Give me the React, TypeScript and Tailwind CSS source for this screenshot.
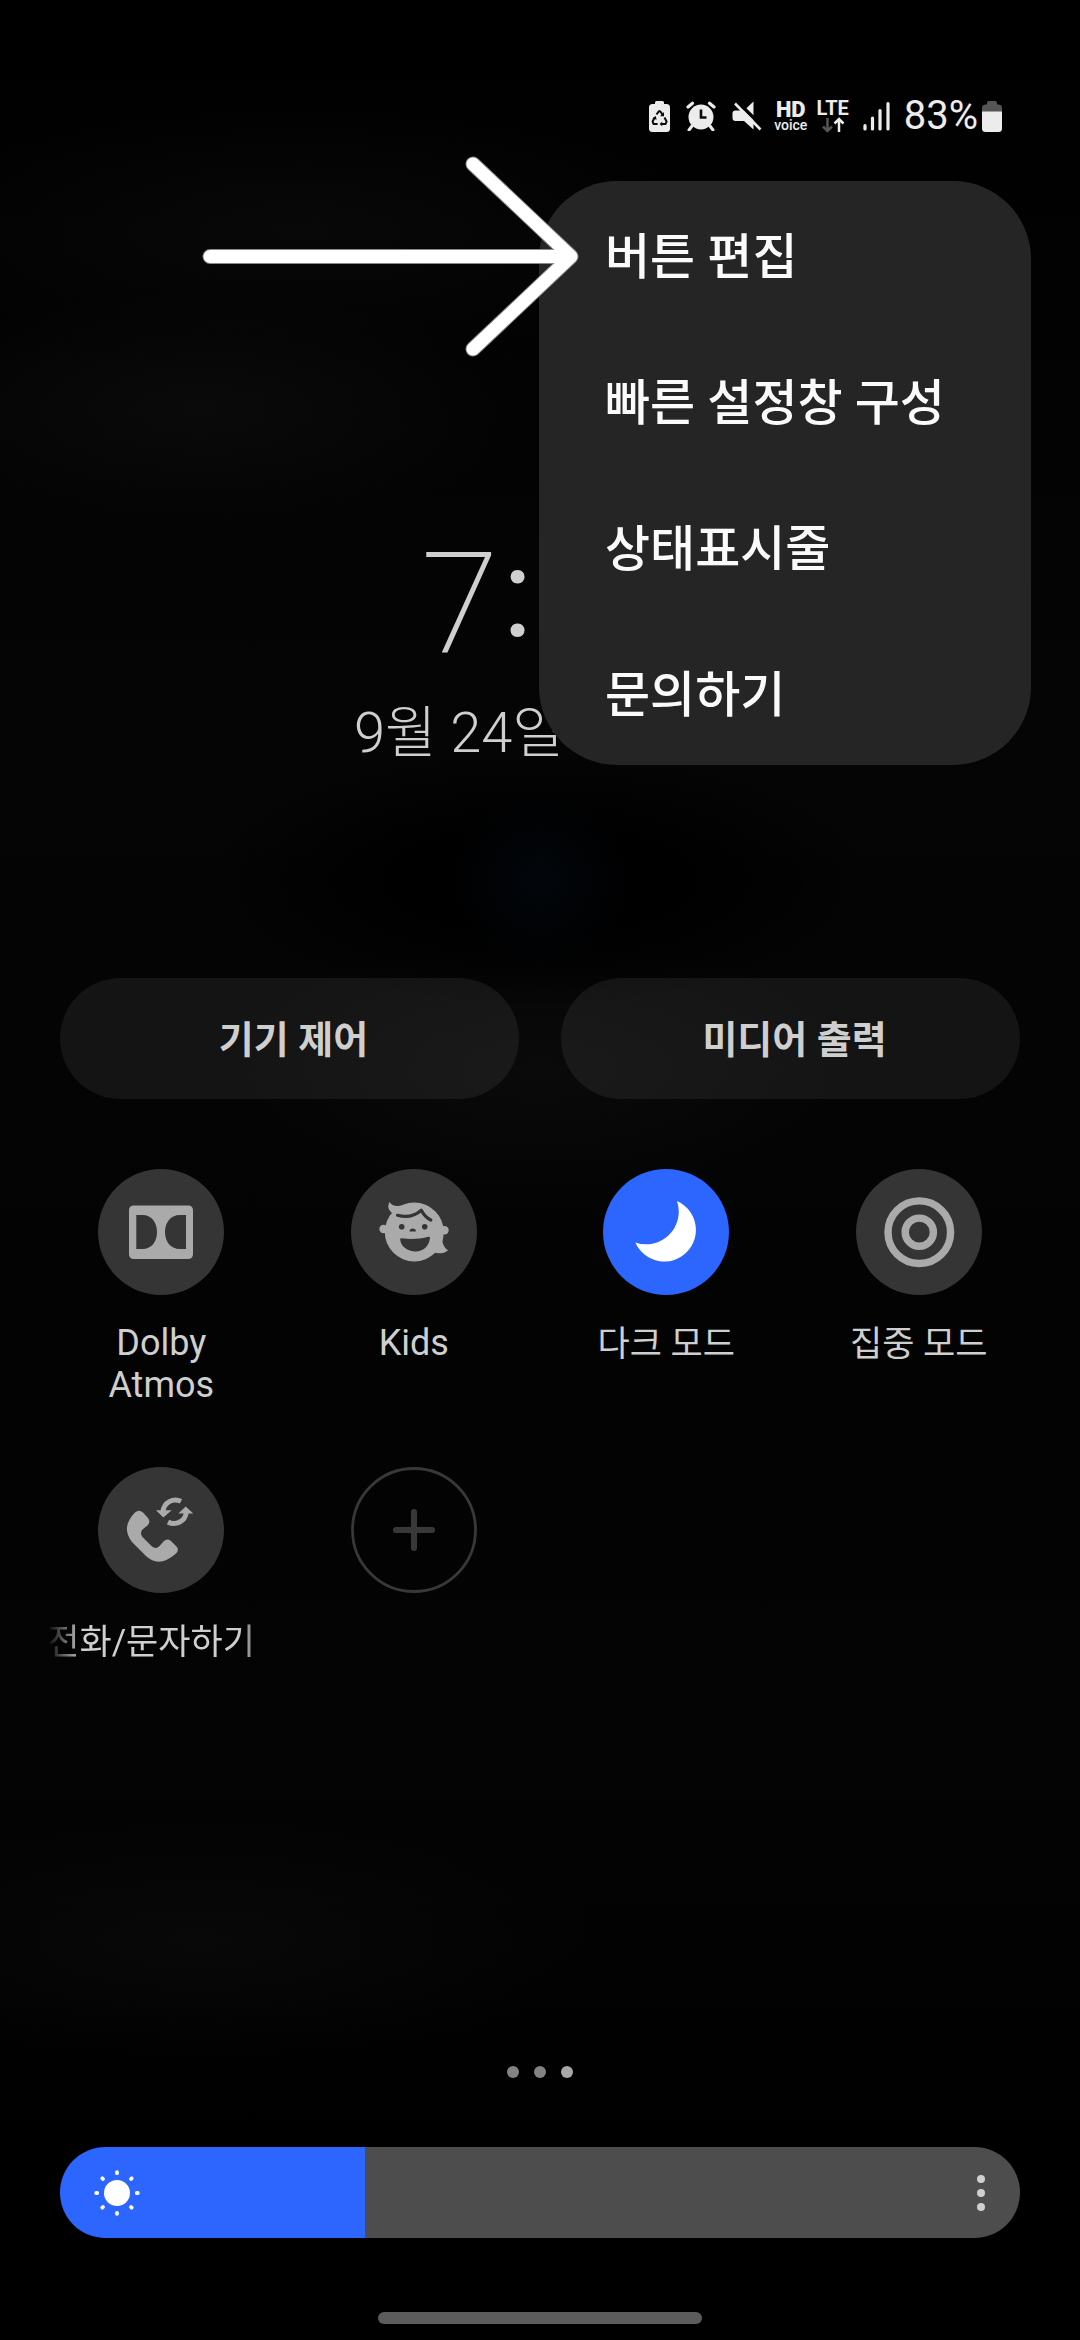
import { useState, type ReactNode } from "react";

const menuItems = ["버튼 편집", "빠른 설정창 구성", "상태표시줄", "문의하기"];

function RecycleBattery() {
  return (
    <svg className="h-8 w-[21px]" viewBox="0 0 21 32" aria-hidden="true">
      <path d="M6 4V2.5Q6 1 7.500 1h6Q15 1 15 2.500V4h2.500Q21 4 21 7.500v21Q21 32 17.500 32h-14Q0 32 0 28.500v-21Q0 4 3.500 4z" fill="#ececec" />
      <g fill="none" stroke="#0a0a0a" strokeWidth="2" strokeLinejoin="round">
        <path d="M7.500 14.500L10 11.200h1.200L13.800 15" />
        <path d="M15.500 17.500L17.600 21.500 16.600 24H12.600" />
        <path d="M8.600 24H4.500L3.600 21.500 5.700 17.500" />
      </g>
      <path d="M15 12v4.300h-4zM13.200 21.700v4.500l-2.600-2.200zM3.500 18.200l3.300-2.200.8 3.800z" fill="#0a0a0a" />
    </svg>
  );
}

function AlarmIcon() {
  return (
    <svg className="h-[30px] w-[30px]" viewBox="0 0 30 30" aria-hidden="true">
      <circle cx="15" cy="16" r="12.500" fill="#ececec" />
      <path d="M6 25l-3 4M24 25l3 4" stroke="#ececec" strokeWidth="3" strokeLinecap="round" />
      <path d="M2 6L6.500 2.200M28 6L23.500 2.200" stroke="#ececec" strokeWidth="3.200" strokeLinecap="round" />
      <path d="M15 8.500v8h5.500" fill="none" stroke="#0a0a0a" strokeWidth="2.600" />
    </svg>
  );
}

function MuteIcon() {
  return (
    <svg className="h-[30px] w-[30px]" viewBox="0 0 30 30" aria-hidden="true">
      <path d="M21.500.5v28L12 20H3.500Q.5 20 .5 17v-5Q.5 9.500 3.500 9.500H12z" fill="#ececec" />
      <path d="M5.500 1L31 26" stroke="#000" strokeWidth="3.500" />
      <path d="M3 2.500L28.500 28.500" stroke="#ececec" strokeWidth="2.600" />
    </svg>
  );
}

function SignalIcon() {
  return (
    <svg className="h-[30px] w-[28px]" viewBox="0 0 28 30" aria-hidden="true">
      <g stroke="#ececec" strokeWidth="3.200" strokeLinecap="round">
        <path d="M3 24.500v3.500M10.500 17v11M18 9.500V28M26 2.500V28" />
      </g>
    </svg>
  );
}

function BatteryIcon() {
  return (
    <svg className="h-8 w-5" viewBox="0 0 20 32" aria-hidden="true">
      <path d="M5 4.500V3Q5 1 7 1h6q2 0 2 2v1.500h1.500Q20 4.500 20 8v4H0V8Q0 4.500 3.500 4.500z" fill="#555" />
      <path d="M0 11.500h20v17Q20 32 16.500 32h-13Q0 32 0 28.500z" fill="#ececec" />
    </svg>
  );
}

function StatusBar() {
  return (
    <header className="flex h-[34px] items-center justify-end pr-[78px] text-[#ececec]">
      <div className="flex items-center gap-4">
        <RecycleBattery />
        <AlarmIcon />
        <MuteIcon />
      </div>
      <div className="ml-3 flex w-[34px] flex-col items-center">
        <span className="text-[22px] leading-[19px] font-black">HD</span>
        <span className="text-[14px] leading-[13px] font-medium">voice</span>
      </div>
      <div className="ml-2 flex w-[34px] flex-col items-center">
        <span className="text-[20px] leading-[18px] font-bold">LTE</span>
        <svg className="h-4 w-6" viewBox="0 0 24 16" aria-hidden="true">
          <path d="M6.500 1v12M2 9.500l4.500 4.500 4.500-4.500" fill="none" stroke="#555" strokeWidth="2.500" />
          <path d="M18 15V3M13.500 6.500L18 2l4.500 4.500" fill="none" stroke="#ececec" strokeWidth="2.500" />
        </svg>
      </div>
      <div className="ml-3">
        <SignalIcon />
      </div>
      <span className="ml-[14px] text-[40px] leading-[34px]">83%</span>
      <div className="ml-1">
        <BatteryIcon />
      </div>
    </header>
  );
}

function DolbyIcon() {
  return (
    <svg className="size-full" viewBox="0 0 126 126" aria-hidden="true">
      <path
        fillRule="evenodd"
        fill="#aaa"
        d="M36 36.500h54q5 0 5 5v43.500q0 5-5 5H36q-5 0-5-5V41.500q0-5 5-5zM38.300 46v34h6c10 0 14.700-8 14.700-17s-4.700-17-14.700-17zM88 46h-6c-10 0-15 8-15 17s5 17 15 17h6z"
      />
    </svg>
  );
}

function KidsIcon() {
  return (
    <svg className="size-full" viewBox="0 0 126 126" aria-hidden="true">
      <g fill="#aaa">
        <circle cx="63.300" cy="63" r="29.500" />
        <circle cx="32.500" cy="60" r="4.200" />
        <circle cx="93.500" cy="61.300" r="4.200" />
        <path d="M38.500 33c2.500 4 7 5 14 3L41 47.500c1-2 .5-3-1-4.500-3-3-3.500-6-1.500-10z" />
        <path d="M92.500 64c-3 8 0 14 4.500 17.500-4 3-9 3.500-14 2l-4-7z" />
      </g>
      <path d="M46.500 46.300c9 2.500 17 1 23.800-5 2 4 5 7.500 9.500 9.700" fill="none" stroke="#353535" strokeWidth="3.200" strokeLinecap="round" strokeLinejoin="round" />
      <g fill="#353535">
        <circle cx="50.700" cy="57.700" r="2.800" />
        <circle cx="73.700" cy="57.700" r="2.800" />
        <path d="M58.500 62.500a3.200 3 0 0 1 6.400 0z" />
        <path d="M50.500 69.300c9.500 1.200 18.500.7 27-1.600 1-.2 1.700.5 1.500 1.500-1 8-7 13.300-14.500 13.300-8 0-14.500-5-15.300-11.700-.1-1 .4-1.600 1.300-1.500z" />
      </g>
    </svg>
  );
}

function MoonIcon() {
  return (
    <svg className="size-full" viewBox="0 0 126 126" aria-hidden="true">
      <path d="M74 32A31.600 31.600 0 1 1 32.300 73.500A32.700 32.700 0 0 0 74 32z" fill="#fff" />
    </svg>
  );
}

function FocusIcon() {
  return (
    <svg className="size-full" viewBox="0 0 126 126" aria-hidden="true">
      <g fill="none" stroke="#aaa" strokeWidth="7.400">
        <circle cx="63.300" cy="63.200" r="31.300" />
        <circle cx="63.300" cy="63.200" r="14.100" />
      </g>
    </svg>
  );
}

function CallSyncIcon() {
  return (
    <svg className="size-full" viewBox="0 0 126 126" aria-hidden="true">
      <path
        fill="#aaa"
        d="M37 45.500Q41 42 45 45.500L50 51Q53 55 49.500 58.500L44.500 62.500Q41.500 66 44.500 70L54 79.500Q58 82.500 61.500 79L65.500 74.500Q69 71 73 74L78.500 79.500Q81.500 83 78 86.500Q61 101.500 48 89L34 75Q22.500 60.500 37 45.500Z"
      />
      <path d="M83 34.300A12.500 12.500 0 0 0 65 44.500M70 55A12.500 12.500 0 0 0 88.300 45.500" fill="none" stroke="#aaa" strokeWidth="5" />
      <path d="M58 43.300h15.700l-8.400 7.200zM95.300 46.500H80.300l7.400-7z" fill="#aaa" />
    </svg>
  );
}

function PlusIcon() {
  return (
    <svg className="size-full" viewBox="0 0 126 126" aria-hidden="true">
      <circle cx="63" cy="63" r="61.500" fill="none" stroke="#383838" strokeWidth="2.800" />
      <path d="M63 45v36M45 63h36" stroke="#383838" strokeWidth="6" strokeLinecap="round" />
    </svg>
  );
}

interface TileProps {
  icon: ReactNode;
  tone: string;
  label?: ReactNode;
  name?: string;
  pressed?: boolean;
}

function Tile({ icon, tone, label, name, pressed = false }: TileProps) {
  return (
    <button type="button" aria-label={name} aria-pressed={pressed} className="flex flex-col items-center gap-[27px]">
      <span className={`block size-[126px] shrink-0 rounded-full ${tone}`}>{icon}</span>
      {label}
    </button>
  );
}

function TileLabel({ children }: { children: ReactNode }) {
  return <span className="w-[170px] text-[36px] leading-[42px]">{children}</span>;
}

function KoreanTileLabel({ children }: { children: ReactNode }) {
  return <span className="text-[35px] leading-[45px] whitespace-nowrap">{children}</span>;
}

function PillButton({ children }: { children: ReactNode }) {
  return (
    <button type="button" className="h-[121px] rounded-full bg-[#ffffff11] pt-1 pl-2 text-[38px] font-bold">
      {children}
    </button>
  );
}

function BrightnessSlider() {
  const [level, setLevel] = useState(81);
  const percent = (level / 255) * 100;
  return (
    <div className="relative mx-[60px] mt-[69px]">
      <input
        type="range"
        aria-label="밝기"
        min={0}
        max={255}
        value={level}
        onChange={(e) => setLevel(Number(e.target.value))}
        className="block h-[91px] w-full appearance-none rounded-full [&::-webkit-slider-thumb]:opacity-0"
        style={{ background: `linear-gradient(to right, #2c66ff ${percent}%, #4d4d4d ${percent}%)` }}
      />
      <div className="pointer-events-none absolute inset-y-0 left-[33px] flex items-center">
        <svg className="size-12" viewBox="-24 -24 48 48" aria-hidden="true">
          <circle r="13" fill="#fff" />
          <path
            d="M0-19.800v-1M0 19.800v1M-19.800 0h-1M19.800 0h1M-14-14l-.7-.7M14 14l.7.7M-14 14l-.7.7M14-14l.7-.7"
            stroke="#fff"
            strokeWidth="3.800"
            strokeLinecap="round"
          />
        </svg>
      </div>
      <button type="button" aria-label="더보기" className="absolute inset-y-0 right-[15px] flex w-12 flex-col items-center justify-center gap-[6px]">
        <span className="size-2 rounded-full bg-[#cfcfcf]" />
        <span className="size-2 rounded-full bg-[#cfcfcf]" />
        <span className="size-2 rounded-full bg-[#cfcfcf]" />
      </button>
    </div>
  );
}

export default function App() {
  return (
    <div className="relative flex min-h-screen w-full flex-col bg-black bg-[radial-gradient(ellipse_320px_120px_at_200px_410px,#0a0a0a,transparent),radial-gradient(ellipse_420px_130px_at_300px_230px,#080808,transparent),radial-gradient(circle_90px_at_540px_880px,#02060b,transparent),radial-gradient(ellipse_340px_130px_at_540px_880px,#000_40%,transparent),radial-gradient(ellipse_320px_130px_at_540px_1070px,#0a0a0a,transparent),radial-gradient(ellipse_400px_120px_at_200px_1940px,#080808,transparent),linear-gradient(#000,#050505_30%,#030303_60%,#040404_75%,#000_93%)] pt-[99px] pb-4 font-[Roboto,'Noto_Sans_CJK_KR',sans-serif] text-[#cfcfcf]">
      <StatusBar />

      <section className="mt-[397px]">
        <p className="flex items-start gap-1 pl-[421px]">
          <span className="text-[141px] leading-[148px] font-extralight">7</span>
          <span className="text-[124px] leading-[128px] font-normal">:</span>
        </p>
        <p className="mt-[18px] pl-[354px] text-[56px] leading-[74px] font-light">9월 24일</p>
      </section>

      <div className="mx-[60px] mt-[208px] grid grid-cols-2 gap-[42px]">
        <PillButton>기기 제어</PillButton>
        <PillButton>미디어 출력</PillButton>
      </div>

      <main className="mx-[35px] mt-[70px] grid grid-cols-4 items-start gap-y-[61px]">
        <Tile tone="bg-[#353535]" icon={<DolbyIcon />} label={<TileLabel>Dolby Atmos</TileLabel>} />
        <Tile tone="bg-[#353535]" icon={<KidsIcon />} label={<TileLabel>Kids</TileLabel>} />
        <Tile tone="bg-[#2c66ff]" pressed icon={<MoonIcon />} label={<KoreanTileLabel>다크 모드</KoreanTileLabel>} />
        <Tile tone="bg-[#353535]" icon={<FocusIcon />} label={<KoreanTileLabel>집중 모드</KoreanTileLabel>} />
        <Tile
          tone="bg-[#353535]"
          icon={<CallSyncIcon />}
          label={
            <span className="flex w-[228px] [mask-image:linear-gradient(to_right,transparent,black_36px,black_192px,transparent_228px)]">
              <KoreanTileLabel>전화/문자하기</KoreanTileLabel>
            </span>
          }
        />
        <Tile tone="bg-transparent" icon={<PlusIcon />} name="추가" />
      </main>

      <div className="mt-auto flex justify-center gap-[15px]">
        <span className="size-3 rounded-full bg-[#838383]" />
        <span className="size-3 rounded-full bg-[#838383]" />
        <span className="size-3 rounded-full bg-[#a8a8a8]" />
      </div>
      <BrightnessSlider />
      <div className="mx-auto mt-[74px] h-3 w-[324px] rounded-full bg-[#5c5c5c]" />

      <nav className="absolute top-[181px] right-[49px] w-[492px] rounded-[78px] bg-[#252525]">
        <ul>
          {menuItems.map((item) => (
            <li key={item}>
              <button type="button" className="h-[146px] w-full px-[66px] pt-2 text-left text-[49px] font-medium text-[#fafafa]">
                {item}
              </button>
            </li>
          ))}
        </ul>
      </nav>

      <svg className="pointer-events-none absolute top-[150px] right-[494px] h-[214px] w-[390px]" viewBox="0 0 390 214" aria-hidden="true">
        <path d="M14 106.500H366M277 14L375 106.500L277 199" fill="none" stroke="#8a8a8a" strokeWidth="15" strokeLinecap="round" strokeLinejoin="round" />
        <path d="M14 106.500H366M277 14L375 106.500L277 199" fill="none" stroke="#fff" strokeWidth="13" strokeLinecap="round" strokeLinejoin="round" />
      </svg>
    </div>
  );
}
